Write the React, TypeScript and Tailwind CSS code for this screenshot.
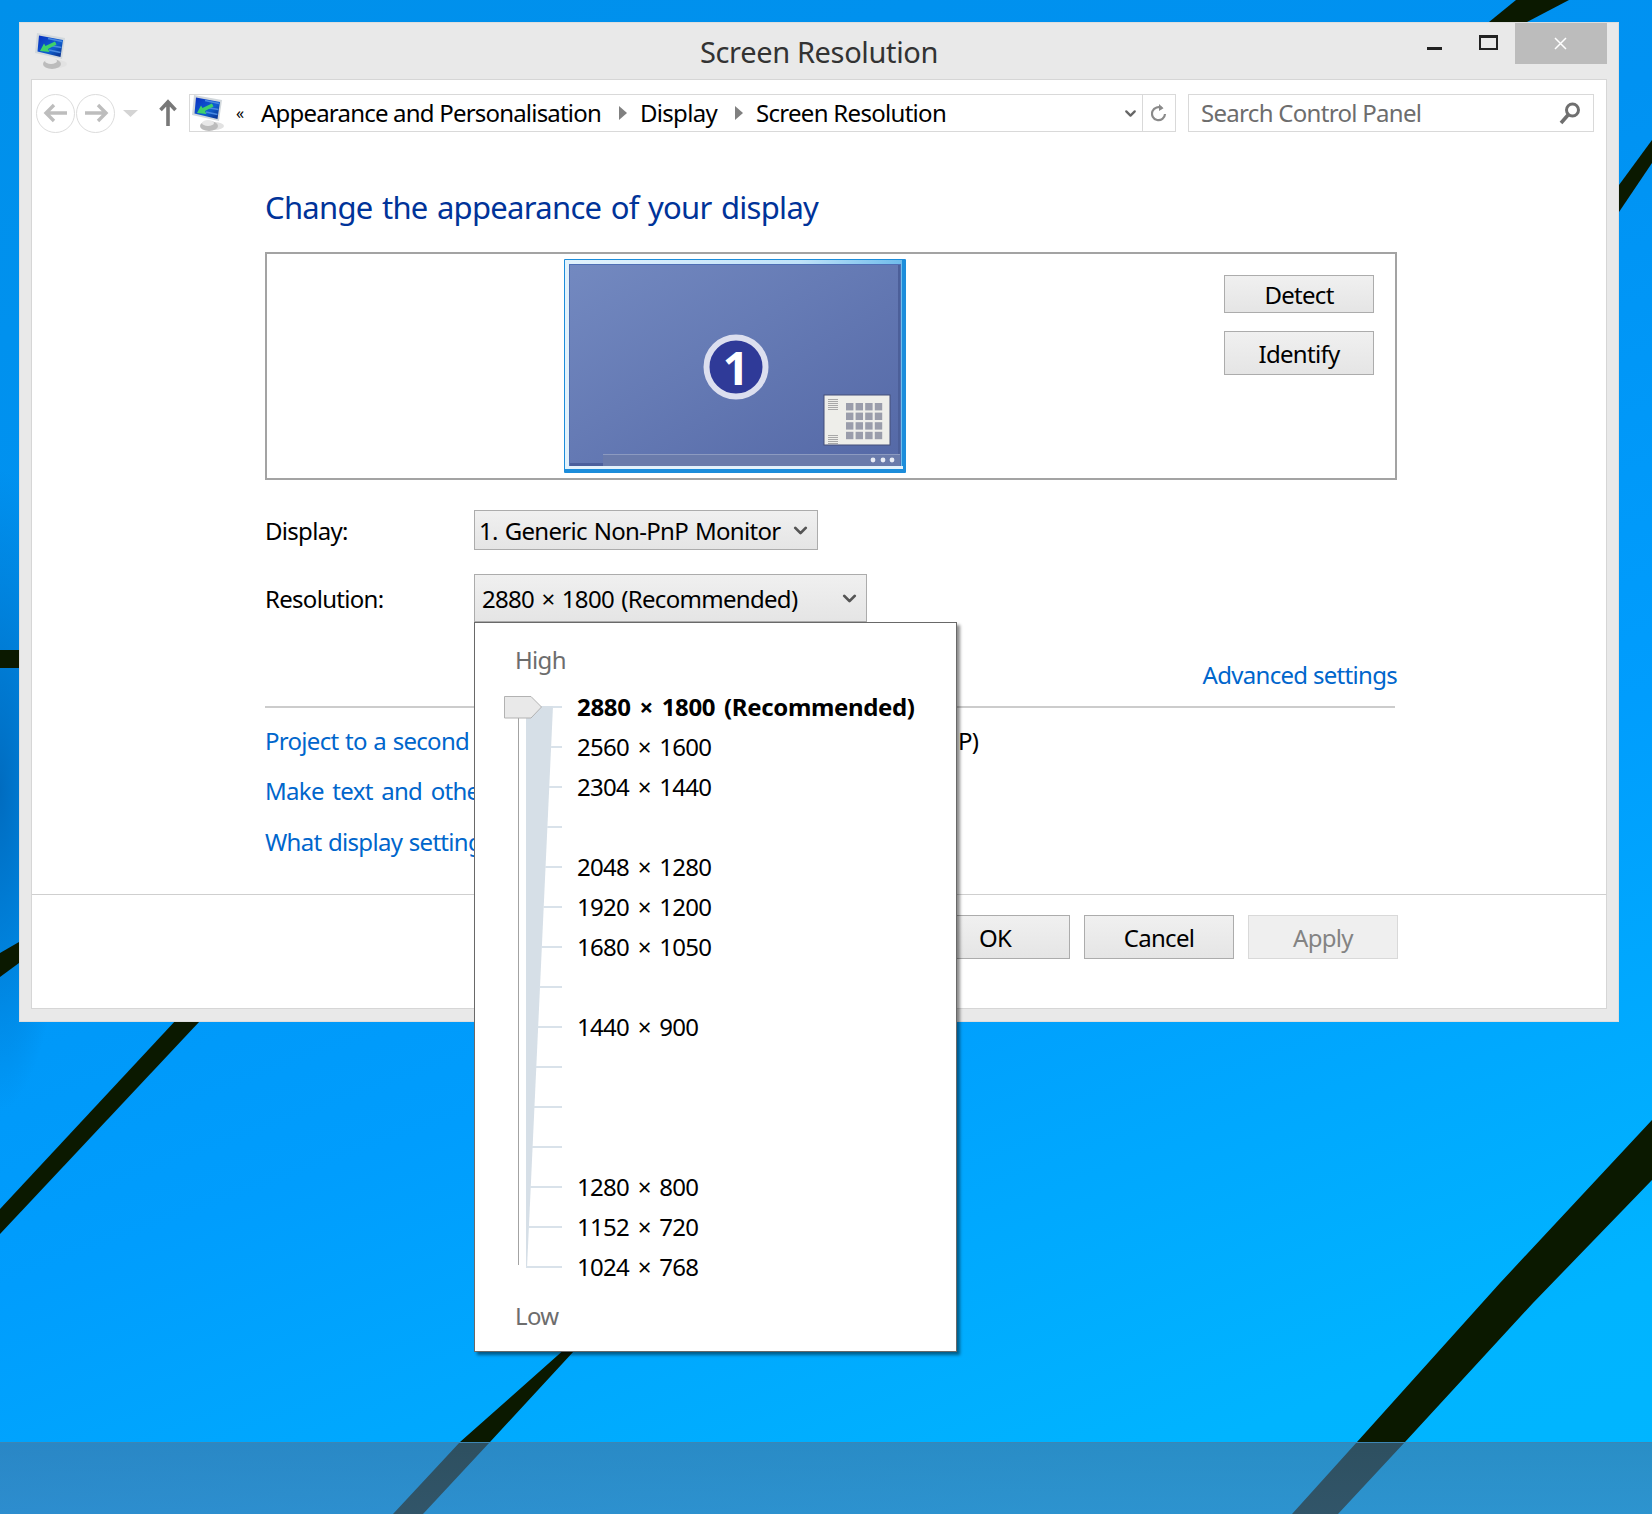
import { ChevronDown } from 'lucide-react';

const resolutions = [
  '2880 × 1800 (Recommended)',
  '2560 × 1600',
  '2304 × 1440',
  '',
  '2048 × 1280',
  '1920 × 1200',
  '1680 × 1050',
  '',
  '1440 × 900',
  '',
  '',
  '',
  '1280 × 800',
  '1152 × 720',
  '1024 × 768',
];

function MonitorIcon() {
  return (
    <svg width="34" height="38" viewBox="0 0 34 38" className="shrink-0">
      <defs>
        <linearGradient id="scr" x1="0" y1="0" x2="1" y2="1">
          <stop offset="0" stopColor="#0a2fc0" />
          <stop offset="0.6" stopColor="#0f5fd0" />
          <stop offset="1" stopColor="#0a2a80" />
        </linearGradient>
      </defs>
      <ellipse cx="22" cy="32" rx="10" ry="4" fill="#e2e2e2" />
      <ellipse cx="17" cy="32" rx="9" ry="5" fill="#bcbcbc" />
      <ellipse cx="16" cy="29" rx="6" ry="3" fill="#e8e8e8" />
      <polygon points="2,1 30,6 27,27 0,21" fill="#d2d8dc" />
      <polygon points="4,3.5 28,8 25.5,25 2.5,19.5" fill="url(#scr)" />
      <path d="M13 6.5 L27 9.5 M15 13.5 L26.5 15.5 M14 18 L25.5 20.5" stroke="#4a8ae0" strokeWidth="1.5" />
      <path d="M5 19 L9 11.5 L10.5 14 L20 9.5 L21.5 12.5 L13 17 L14.5 20 Z" fill="#3fd06a" />
    </svg>
  );
}

function Caret({ color = '#555555' }: { color?: string }) {
  return <ChevronDown size={21} strokeWidth={3.2} color={color} className="shrink-0" />;
}

function Button({ label, height, disabled }: { label: string; height: string; disabled?: boolean }) {
  return (
    <button
      className={`w-[150px] ${height} flex items-center justify-center border pt-[2px] text-[24px] tracking-[-0.7px] ${
        disabled
          ? 'border-[#d9d9d9] bg-[#efefef] text-[#838383]'
          : 'border-[#acacac] bg-gradient-to-b from-[#f0f0f0] to-[#e5e5e5] text-black'
      }`}
    >
      {label}
    </button>
  );
}

function ResolutionPopup() {
  return (
    <div className="absolute left-[474px] top-[622px] z-10 h-[730px] w-[483px] border border-[#696969] bg-white shadow-[3px_3px_3px_rgba(0,0,0,0.45)]">
      <div className="mt-[21px] pl-[40px] text-[24px] leading-[32px] tracking-[-0.7px] text-[#6d6d6d]">High</div>
      <div className="mt-[11px] flex pl-[29px]">
        <svg width="60" height="600" viewBox="0 0 60 600" className="shrink-0">
          <polygon points="22,19 49,19 23,581 22,581" fill="#d6dfe7" />
          {resolutions.map((_, i) => (
            <line key={i} x1={22 + (27 * (14 - i)) / 14} x2="58" y1={20 + i * 40} y2={20 + i * 40} stroke="#d9e2ea" strokeWidth="2" />
          ))}
          <line x1="14.5" x2="14.5" y1="30" y2="578" stroke="#a3a3a3" strokeWidth="1" />
          <polygon points="0.5,9.5 27,9.5 37.5,20 27,31 0.5,31" fill="#e9e9e9" stroke="#b2b2b2" />
        </svg>
        <div className="ml-[13px] flex flex-col">
          {resolutions.map((r, i) => (
            <div
              key={i}
              className={`flex h-[40px] items-center whitespace-pre text-[24px] text-black ${
                i === 0 ? 'font-bold tracking-[-0.35px] [word-spacing:3px]' : 'tracking-[-0.7px] [word-spacing:3px]'
              }`}
            >
              {r}
            </div>
          ))}
        </div>
      </div>
      <div className="mt-[13px] pl-[40px] text-[24px] leading-[32px] tracking-[-0.7px] text-[#6d6d6d]">Low</div>
    </div>
  );
}

export default function App() {
  return (
    <div className="relative h-[1514px] w-[1652px] overflow-hidden bg-[radial-gradient(ellipse_70px_320px_at_0px_790px,#006cc0,transparent),linear-gradient(160deg,#0090ea_0%,#0092f2_32%,#009dfd_61%,#00b4ff_89%,#00b6ff_100%)] pl-[19px] pt-[22px] font-['Noto_Sans','Open_Sans',sans-serif]">
      {/* wallpaper lines */}
      <svg className="absolute inset-0" width="1652" height="1514" viewBox="0 0 1652 1514">
        <g fill="#0b1900">
          <path d="M1652 1120 L1500 1283 L1357 1442 L1292 1514 L1338 1514 L1405 1442 L1533 1303 L1652 1180 Z" />
          <path d="M620 1300 L460 1442 L393 1514 L423 1514 L490 1442 L574 1351 L640 1300 Z" />
          <path d="M190 1005 L0 1209 L0 1234 L215 1005 Z" />
          <path d="M0 650 L19 650 L19 668 L0 668 Z" />
          <path d="M0 953 L19 942 L19 963 L0 977 Z" />
          <path d="M1619 185 L1652 140 L1652 163 L1619 212 Z" />
          <path d="M1516 0 L1569 0 L1527 22 L1489 22 Z" />
        </g>
      </svg>

      {/* window */}
      <div className="relative flex h-[1000px] w-[1600px] flex-col border border-[#dedede] bg-[#e9e9e9] text-black">
        {/* title bar */}
        <div className="grid h-[56px] shrink-0 grid-cols-[1fr_auto_1fr]">
          <div className="pl-[15px] pt-[9px]">
            <MonitorIcon />
          </div>
          <div className="pt-[9px] text-[29px] leading-[40px] tracking-[-0.35px] text-[#333333]">Screen Resolution</div>
          <div className="flex justify-end pr-[11px]">
            <div className="mt-[24px] h-[3px] w-[15px] bg-[#222222]" />
            <div className="ml-[37px] mt-[12px] h-[15px] w-[19px] border-2 border-t-[3px] border-[#222222]" />
            <div className="ml-[17px] flex h-[41px] w-[92px] items-center justify-center bg-[#bcbcbc] pr-[2px]">
              <svg width="13" height="13" viewBox="0 0 13 13">
                <path d="M1 1 L12 12 M12 1 L1 12" stroke="#ffffff" strokeWidth="1.5" />
              </svg>
            </div>
          </div>
        </div>

        {/* client area */}
        <div className="mx-[11px] flex h-[930px] flex-col border border-[#d6d6d6] bg-white">
          {/* navigation row */}
          <div className="flex h-[52px] shrink-0 items-end pl-[4px]">
            <div className="flex h-[38px] items-center">
              <div className="flex h-[39px] w-[39px] items-center justify-center rounded-full border border-[#dcdcdc]">
                <svg width="26" height="20" viewBox="0 0 26 20">
                  <path d="M24 10 H3 M11 2 L3 10 L11 18" fill="none" stroke="#bdbdbd" strokeWidth="3.4" />
                </svg>
              </div>
              <div className="ml-[1px] flex h-[39px] w-[39px] items-center justify-center rounded-full border border-[#dcdcdc]">
                <svg width="26" height="20" viewBox="0 0 26 20">
                  <path d="M2 10 H23 M15 2 L23 10 L15 18" fill="none" stroke="#bdbdbd" strokeWidth="3.4" />
                </svg>
              </div>
              <svg width="15" height="7" viewBox="0 0 15 7" className="ml-[8px]">
                <path d="M0 0 H15 L7.5 7 Z" fill="#d4d4d4" />
              </svg>
              <svg width="18" height="28" viewBox="0 0 18 28" className="ml-[21px]">
                <path d="M9 27 V3 M1.5 11 L9 3 L16.5 11" fill="none" stroke="#787878" strokeWidth="3.6" />
              </svg>
            </div>
            <div className="ml-[12px] flex h-[38px] w-[987px] items-center border border-[#d9d9d9] pl-[2px] text-[24px] tracking-[-0.7px]">
              <MonitorIcon />
              <span className="ml-[10px] w-[25px] text-[16px]">«</span>
              <span className="tracking-[-0.8px]">Appearance and Personalisation</span>
              <span className="ml-[18px] h-0 w-0 border-y-[7px] border-l-[8px] border-y-transparent border-l-[#808080]" />
              <span className="ml-[13px]">Display</span>
              <span className="ml-[18px] h-0 w-0 border-y-[7px] border-l-[8px] border-y-transparent border-l-[#808080]" />
              <span className="ml-[13px]">Screen Resolution</span>
              <div className="ml-auto flex h-full items-center">
                <ChevronDown size={17} strokeWidth={3.2} color="#666666" />
                <div className="ml-[3px] flex h-full w-[33px] items-center justify-center border-l border-[#d9d9d9]">
                  <svg width="16" height="20" viewBox="0 0 16 20">
                    <path d="M11 5.2 A6.5 6.5 0 1 0 14 11" fill="none" stroke="#8a8a8a" strokeWidth="2.2" />
                    <path d="M8 1 L12.5 5.2 L8 8 Z" fill="#8a8a8a" />
                  </svg>
                </div>
              </div>
            </div>
            <div className="ml-[12px] flex h-[38px] w-[406px] items-center justify-between border border-[#d9d9d9] pl-[12px] pr-[11px] text-[24px] tracking-[-0.7px] text-[#6d6d6d]">
              <span>Search Control Panel</span>
              <svg width="24" height="24" viewBox="0 0 24 24">
                <circle cx="14.5" cy="9" r="6" fill="none" stroke="#6f6f6f" strokeWidth="3" />
                <path d="M10 14 L3 22" stroke="#6f6f6f" strokeWidth="3.6" />
              </svg>
            </div>
          </div>

          {/* main content */}
          <div className="h-[762px] shrink-0 overflow-hidden pl-[233px]">
            <h1 className="mt-[55px] text-[31px] font-normal leading-[40px] tracking-[-0.7px] text-[#003399] [word-spacing:1.9px]">
              Change the appearance of your display
            </h1>

            <div className="mt-[25px] flex h-[228px] w-[1132px] items-start justify-between border-2 border-[#a3a3a3] pl-[297px] pr-[21px] pt-[5px]">
              <svg width="342" height="214" viewBox="0 0 342 214">
                <defs>
                  <linearGradient id="desk" x1="0" y1="0" x2="1" y2="1">
                    <stop offset="0" stopColor="#7389c0" />
                    <stop offset="1" stopColor="#5468a6" />
                  </linearGradient>
                  <linearGradient id="frame" x1="0" y1="0" x2="1" y2="0">
                    <stop offset="0" stopColor="#e2f2fc" />
                    <stop offset="0.7" stopColor="#bfe2f8" />
                    <stop offset="1" stopColor="#6fbcec" />
                  </linearGradient>
                </defs>
                <rect width="342" height="214" rx="1" fill="#1c8ddb" />
                <rect x="1" y="1" width="337" height="209" fill="url(#frame)" />
                <rect x="5" y="5" width="332" height="204" fill="#4f6fb5" />
                <rect x="6" y="6" width="330" height="202" fill="url(#desk)" />
                <rect x="334" y="6" width="2" height="202" fill="#4c5f99" />
                <rect x="39" y="195" width="297" height="12" fill="#6a7bab" />
                <rect x="39" y="195" width="297" height="1" fill="#8c9ac0" />
                <rect x="6" y="204" width="33" height="3" fill="#4b5f9c" />
                <rect x="3" y="207" width="336" height="3" fill="#e4f2fc" />
                <circle cx="309" cy="201" r="2.4" fill="#e8ecf5" />
                <circle cx="319" cy="201" r="2.4" fill="#e8ecf5" />
                <circle cx="328" cy="201" r="2.4" fill="#e8ecf5" />
                <circle cx="172" cy="108" r="29.5" fill="#2f3a98" stroke="#dcdfef" strokeWidth="6" />
                <text x="172" y="126" textAnchor="middle" fill="#ffffff" fontSize="46" fontWeight="700" fontFamily="Noto Sans">
                  1
                </text>
                <rect x="260" y="136" width="66" height="50" fill="#eeeeea" stroke="#454f78" strokeWidth="1" />
                {[0, 1, 2, 3].flatMap((r) =>
                  [0, 1, 2, 3].map((c) => (
                    <rect key={`${r}-${c}`} x={282 + c * 9.6} y={144 + r * 9.6} width="7.4" height="7.4" fill="#9a9dab" />
                  ))
                )}
                {[0, 2, 4, 6, 8, 10, 36, 38, 40, 42, 44].map((y) => (
                  <rect key={y} x="264" y={140 + y} width="10" height="1" fill="#a8a8a8" />
                ))}
              </svg>
              <div className="mt-[16px] flex flex-col gap-[18px]">
                <Button label="Detect" height="h-[38px]" />
                <Button label="Identify" height="h-[44px]" />
              </div>
            </div>

            <div className="mt-[30px] flex h-[40px] items-center text-[24px] tracking-[-0.7px]">
              <span className="w-[209px] pt-[2px]">Display:</span>
              <div className="flex h-full w-[344px] items-center justify-between border border-[#acacac] bg-gradient-to-b from-[#f0f0f0] to-[#e5e5e5] pl-[4px] pr-[6px] [word-spacing:1.4px]">
                <span className="pt-[2px]">1. Generic Non-PnP Monitor</span>
                <Caret />
              </div>
            </div>

            <div className="mt-[24px] flex h-[48px] items-center text-[24px] tracking-[-0.7px]">
              <span className="w-[209px] pt-[2px]">Resolution:</span>
              <div className="flex h-full w-[393px] items-center justify-between border border-[#acacac] bg-gradient-to-b from-[#f0f0f0] to-[#e5e5e5] pl-[7px] pr-[6px] [word-spacing:1.8px]">
                <span className="pt-[2px]">2880 × 1800 (Recommended)</span>
                <Caret />
              </div>
            </div>

            <div className="mt-[37px] w-[1132px] text-right text-[24px] leading-[32px] tracking-[-0.7px] text-[#0066cc]">
              Advanced settings
            </div>
            <div className="mt-[15px] h-[2px] w-[1130px] bg-[#cccccc]" />

            {/* these three rows run on under the open dropdown */}
            <div className="mt-[17px] flex h-[32px] items-center whitespace-nowrap text-[24px] tracking-[-0.7px]">
              <span className="w-[209px] overflow-hidden text-[#0066cc] [word-spacing:1px]">Project to a second screen</span>
              <span className="ml-[484px]">P)</span>
            </div>
            <div className="mt-[18px] h-[32px] w-[209px] overflow-hidden whitespace-nowrap text-[24px] leading-[32px] tracking-[-0.7px] text-[#0066cc] [word-spacing:3px]">
              Make text and other items larger or smaller
            </div>
            <div className="mt-[19px] h-[32px] w-[209px] overflow-hidden whitespace-nowrap text-[24px] leading-[32px] tracking-[-0.7px] text-[#0066cc] [word-spacing:1px]">
              What display settings should I choose?
            </div>
          </div>

          {/* footer */}
          <div className="flex flex-1 justify-end gap-[14px] border-t border-[#cfcfcf] pr-[208px] pt-[20px]">
            <Button label="OK" height="h-[44px]" />
            <Button label="Cancel" height="h-[44px]" />
            <Button label="Apply" height="h-[44px]" disabled />
          </div>
        </div>
      </div>

      <ResolutionPopup />

      {/* taskbar */}
      <div className="absolute bottom-0 left-0 h-[72px] w-full border-t border-[#3d86b4] bg-gradient-to-b from-[#4574a0]/60 to-[#4b7daf]/60" />
    </div>
  );
}
